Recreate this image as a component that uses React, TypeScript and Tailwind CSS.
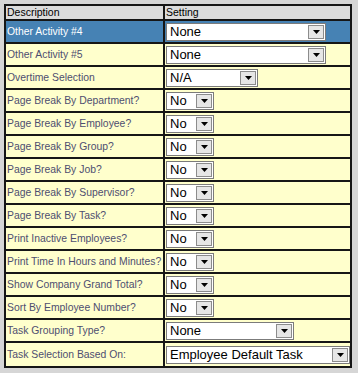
import React from "react";

interface Setting {
  label: string;
  value: string;
  width: string;
  active?: boolean;
}

const settings: Setting[] = [
  { label: "Other Activity #4", value: "None", width: "w-[160px]", active: true },
  { label: "Other Activity #5", value: "None", width: "w-[160px]" },
  { label: "Overtime Selection", value: "N/A", width: "w-[92px]" },
  { label: "Page Break By Department?", value: "No", width: "w-[48px]" },
  { label: "Page Break By Employee?", value: "No", width: "w-[48px]" },
  { label: "Page Break By Group?", value: "No", width: "w-[48px]" },
  { label: "Page Break By Job?", value: "No", width: "w-[48px]" },
  { label: "Page Break By Supervisor?", value: "No", width: "w-[48px]" },
  { label: "Page Break By Task?", value: "No", width: "w-[48px]" },
  { label: "Print Inactive Employees?", value: "No", width: "w-[48px]" },
  { label: "Print Time In Hours and Minutes?", value: "No", width: "w-[48px]" },
  { label: "Show Company Grand Total?", value: "No", width: "w-[48px]" },
  { label: "Sort By Employee Number?", value: "No", width: "w-[48px]" },
  { label: "Task Grouping Type?", value: "None", width: "w-[128px]" },
  { label: "Task Selection Based On:", value: "Employee Default Task", width: "w-[184px]" },
];

const Dropdown = ({ value, width }: { value: string; width: string }) => (
  <div className={`flex h-[18px] ${width} border border-[#7b7b7b] bg-white p-[1px]`}>
    <span className="flex flex-1 items-center pl-[2px] font-['Liberation_Sans',Arial,sans-serif] text-[13px] leading-none whitespace-nowrap text-black">
      {value}
    </span>
    <span className="flex w-[16px] items-center justify-center border border-[#8c8c8c] bg-[#e6e6e6]">
      <svg width="7" height="4" viewBox="0 0 7 4">
        <path d="M0 0h7L3.5 4z" fill="#000" />
      </svg>
    </span>
  </div>
);

const App = () => {
  return (
    <div className="h-[373px] w-[358px] bg-[#d6d6d6] pl-[4px] pt-[4px] font-['Liberation_Sans',Arial,sans-serif]">
      <div className="grid w-[348px] grid-cols-[157px_1fr] gap-[2px] border-2 border-[#161616] bg-[#161616]">
        <div className="flex h-[13px] items-center bg-[#dcdcdc] pl-[1px] text-[10.5px] text-black">Description</div>
        <div className="flex h-[13px] items-center bg-[#dcdcdc] pl-[1px] text-[10.5px] text-black">Setting</div>
        {settings.map((s, i) => {
          const last = i === settings.length - 1;
          const bg = s.active ? "bg-[#4682b4]" : "bg-[#ffffcc]";
          return (
            <React.Fragment key={s.label}>
              <div
                className={`flex ${last ? "h-[23px]" : "h-[21px]"} items-center overflow-hidden ${bg} pl-[1px] text-[10.4px] whitespace-nowrap ${
                  s.active ? "text-white" : "text-[#4e4e70]"
                }`}
              >
                {s.label}
              </div>
              <div className={`flex ${last ? "h-[23px]" : "h-[21px]"} items-center ${bg} pl-[1px]`}>
                <Dropdown value={s.value} width={s.width} />
              </div>
            </React.Fragment>
          );
        })}
      </div>
    </div>
  );
};

export default App;
